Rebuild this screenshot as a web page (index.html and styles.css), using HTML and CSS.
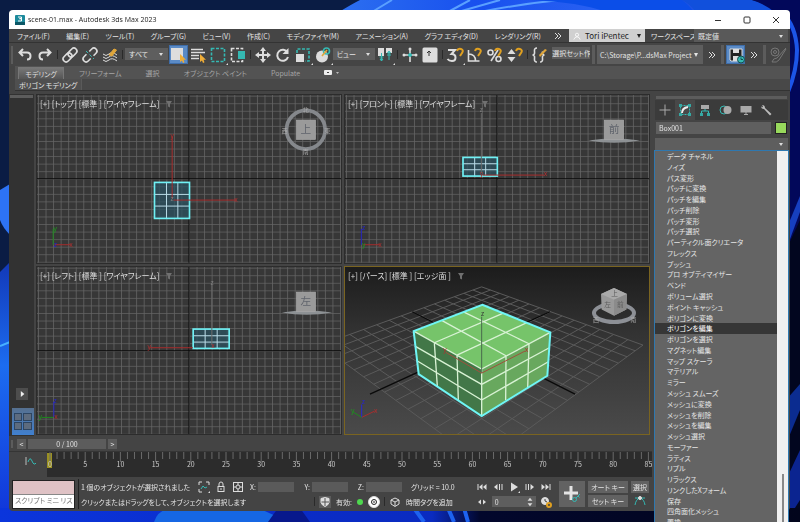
FILE: index.html
```html
<!DOCTYPE html>
<html lang="ja">
<head>
    <meta charset="UTF-8">
    <meta name="viewport" content="width=device-width, initial-scale=1.0">
    <title>scene-01.max - Autodesk 3ds Max 2023</title>
    <link rel="stylesheet" href="styles.css">
</head>
<body>

    <svg class="wallpaper" viewBox="0 0 800 522" preserveAspectRatio="none" aria-hidden="true">
        <defs>
            <linearGradient id="wallLeft" x1="0" y1="0" x2="0" y2="1">
                <stop offset="0" stop-color="#1238b8"/><stop offset=".4" stop-color="#1c6cf0"/><stop offset="1" stop-color="#1033d8"/>
            </linearGradient>
            <linearGradient id="wallTop" x1="0" y1="0" x2="1" y2="0">
                <stop offset="0" stop-color="#2c6ff0"/><stop offset=".3" stop-color="#1850ee"/><stop offset=".6" stop-color="#2a62f2"/><stop offset="1" stop-color="#0c3fd0"/>
            </linearGradient>
            <linearGradient id="wallBottom" x1="0" y1="0" x2="1" y2="0">
                <stop offset="0" stop-color="#0b35dc"/><stop offset=".35" stop-color="#0a2cc8"/><stop offset=".54" stop-color="#0a2bc0"/><stop offset=".6" stop-color="#02072c"/><stop offset="1" stop-color="#02051c"/>
            </linearGradient>
        </defs>
        <rect width="800" height="522" fill="#0a1c44"/>
        <path d="M339 12 Q352 4 360 0 H700 Q780 10 796 70 L700 60 H339Z" fill="url(#wallTop)"/>
        <path d="M372 12 L392 0 M448 12 L470 0 M458 12 L500 0 M480 12 Q520 4 560 0" stroke="#5aa0ff" stroke-width="2" fill="none"/>
        <path d="M530 0 Q580 2 606 12 H694 Q688 4 682 0Z" fill="#0b4ee8"/>
        <path d="M682 0 Q690 4 696 12 H782 Q766 4 752 0Z" fill="#1150dc"/>
        <path d="M752 0 H800 V522 H786 V24 Q772 6 752 0Z" fill="#02085a"/>
        <path d="M782 12 Q796 26 797 50 Q797 70 788 92" stroke="#1c55e8" stroke-width="4" fill="none"/>
        <path d="M786 230 L800 196 V212 L786 250Z" fill="#163fc0"/>
        <path d="M786 250 L800 220 V522 H786Z" fill="#02061f"/>
        <path d="M786 400 L800 384 V410 L786 444Z" fill="#0b2c90"/>
        <path d="M786 480 L800 450 V500 L786 522Z" fill="#0b2490"/>
        <path d="M0 190 L10 184 V235 Q3 228 0 220Z" fill="#2d73f5"/>
        <path d="M0 272 L10 262 V522 H0Z" fill="url(#wallLeft)"/>
        <path d="M0 346 L10 342" stroke="#46b0ff" stroke-width="2"/>
        <rect y="508" width="800" height="14" fill="url(#wallBottom)"/>
        <path d="M154 522 Q157 512 168 508 H256 Q276 514 282 522Z" fill="#1667e4"/>
        <path d="M268 522 L278 508 H300 L310 522Z" fill="#08188c"/>
        <path d="M414 508 L424 522 M448 508 L454 522 M464 508 L468 522" stroke="#1d62f0" stroke-width="4"/>
    </svg>

    <div class="window">
        <header class="titlebar">
            <svg class="app-icon" viewBox="0 0 10 10"><rect width="10" height="10" rx="1" fill="#1c8a9c"/><rect y="7" width="10" height="3" fill="#0c5766"/><path d="M3 2h3.500v1.700H4.500h2V6H3" stroke="#fff" fill="none"/></svg>
            <h1>scene-01.max - Autodesk 3ds Max 2023</h1>
            <button class="win-button" aria-label="最小化"><svg viewBox="0 0 8 8"><path d="M1 4.500h6"/></svg></button>
            <button class="win-button" aria-label="最大化"><svg viewBox="0 0 8 8"><rect x="1" y="1" width="6" height="6" rx="1"/></svg></button>
            <button class="win-button" aria-label="閉じる"><svg viewBox="0 0 8 8"><path d="M1 1l6 6M7 1l-6 6"/></svg></button>
        </header>

        <nav class="menubar">
            <div class="menus">
                <button>ファイル(F)</button>
                <button>編集(E)</button>
                <button>ツール(T)</button>
                <button>グループ(G)</button>
                <button>ビュー(V)</button>
                <button>作成(C)</button>
                <button>モディファイヤ(M)</button>
                <button>アニメーション(A)</button>
                <button>グラフ エディタ(D)</button>
                <button>レンダリング(R)</button>
            </div>
            <button class="more" aria-label="その他のメニュー"><svg viewBox="0 0 10 10"><path d="M2 2l3 3-3 3M5 2l3 3-3 3"/></svg></button>
            <button class="user"><svg viewBox="0 0 10 10"><circle cx="5" cy="3.500" r="2"/><path d="M1 9.500q1-3.500 4-3.500t4 3.500"/></svg><span>Tori iPentec</span><i class="caret"></i></button>
            <label for="workspace">ワークスペース:</label>
            <select id="workspace"><option>既定値</option></select>
        </nav>

        <div class="toolbar">
            <span class="handle"></span>
            <button aria-label="元に戻す"><svg viewBox="0 0 20 20"><path d="M8 4L4.500 7.500 8 11M5 7.500h7q3.500 0 3.500 3.500T12 14.500" class="thick"/></svg></button>
            <button aria-label="やり直し"><svg viewBox="0 0 20 20"><path d="M12 4l3.500 3.500L12 11M15 7.500H8q-3.500 0-3.500 3.500T8 14.500" class="thick"/></svg></button>
            <span class="sep"></span>
            <button aria-label="リンク"><svg viewBox="0 0 20 20"><g transform="rotate(-45 10 10)" stroke-width="1.600"><rect x="1.500" y="7" width="10" height="6" rx="3"/><rect x="8.500" y="7" width="10" height="6" rx="3"/></g></svg></button>
            <button aria-label="リンク解除"><svg viewBox="0 0 20 20"><g transform="rotate(-45 10 10)" stroke-width="1.600"><path d="M8 13H4.500a3 3 0 010-6H8M12 7h3.500a3 3 0 010 6H12"/></g><path d="M6 6l8 8" class="teal" stroke-dasharray="3 2"/></svg></button>
            <button aria-label="スペース ワープにバインド"><svg viewBox="0 0 20 20"><path d="M3 9q3 3 6 0t8 1M3 12q3 3 6 0t8 1M3 15q3 3 6 0t8 1"/><path d="M9 10l5-6 2.500 1-4.500 6z" fill="#e0a63a" stroke="#e0a63a"/></svg></button>
            <span class="sep"></span>
            <select class="filter" aria-label="選択フィルタ"><option>すべて</option></select>
            <button class="pressed" aria-label="オブジェクトを選択"><svg viewBox="0 0 20 20"><rect x="3.500" y="3.500" width="11" height="11" fill="#ddd"/><path d="M12 9v8l2-1.500 1 2.500 1.500-.8-1-2.400h2.500z" fill="#f0ae38" stroke="none"/></svg></button>
            <button aria-label="名前による選択"><svg viewBox="0 0 20 20"><path d="M3 4.500h12M3 7.500h14M3 10.500h8M3 13.500h8" stroke-width="1.600"/><path d="M12 9v8l2-1.500 1 2.500 1.500-.8-1-2.400h2.500z" fill="#f0ae38" stroke="none"/></svg></button>
            <button class="flyout" aria-label="矩形選択領域"><svg viewBox="0 0 20 20"><rect x="3.500" y="3.500" width="13" height="13" class="teal" stroke-width="1.600" stroke-dasharray="3 1.500"/></svg></button>
            <button aria-label="窓/交差"><svg viewBox="0 0 20 20"><rect x="3.500" y="3.500" width="11" height="13" stroke-width="1.600" stroke-dasharray="3 1.500"/><rect x="10" y="6" width="7" height="8" fill="#35b9b3" stroke="none"/></svg></button>
            <span class="sep"></span>
            <button aria-label="移動"><svg viewBox="0 0 20 20"><path d="M10 5v10M5 10h10" class="thick"/><path d="M10 2l3 4H7zM10 18l3-4H7zM2 10l4-3v6zM18 10l-4-3v6z" class="solid"/></svg></button>
            <button aria-label="回転"><svg viewBox="0 0 20 20"><path d="M14.500 7.500A5.500 5.500 0 1015 12" class="thick"/><path d="M15.500 3v6h-6z" class="solid"/></svg></button>
            <button class="flyout" aria-label="スケール"><svg viewBox="0 0 20 20"><path d="M4 8V4h12v12h-4" class="teal" stroke-width="1.600" stroke-dasharray="3 1.500"/><rect x="3" y="9" width="8" height="8" class="solid"/></svg></button>
            <button class="flyout" aria-label="選択して配置"><svg viewBox="0 0 20 20"><circle cx="9" cy="11.500" r="6" class="solid"/><circle cx="13.500" cy="6" r="3" class="teal" stroke-width="1.600"/><path d="M9 11l5-6" stroke="#e0a63a" stroke-width="1.600"/></svg></button>
            <select class="coord" aria-label="参照座標系"><option>ビュー</option></select>
            <button class="flyout" aria-label="基点中心"><svg viewBox="0 0 20 20"><path d="M3 3h6v8H3zM11 3h6v5h-6z" class="solid"/><path d="M6.500 8v8M14 7v8M4.500 12h4M12 10h4M6.500 16l-1.500-2h3zM14 6l-1.500 2h3z" class="teal"/></svg></button>
            <span class="sep"></span>
            <button aria-label="選択とマニピュレート"><svg viewBox="0 0 20 20"><path d="M10 3v14M3 10h14" stroke-width="1.600"/><circle cx="10" cy="4" r="1.500" class="solid"/><circle cx="4" cy="10" r="1.500" class="solid"/><circle cx="16" cy="10" r="1.500" class="solid"/><circle cx="10" cy="10" r="1.500" fill="#35b9b3" class="teal"/></svg></button>
            <button aria-label="キーボード ショートカット"><svg viewBox="0 0 20 20"><rect x="2.500" y="2.500" width="15" height="15" rx="1.500" class="solid"/><path d="M9 6v5M7 8l2-2 2 2" stroke="#333"/></svg></button>
            <span class="sep"></span>
            <button class="flyout" aria-label="3D スナップ"><svg viewBox="0 0 20 20"><path d="M3 5h7l-3.500 4q4 0 4 3.500T7 16q-3 0-4.500-2" class="thick"/><path d="M12 6q1-3 4-2t1 4l-2 3" class="gold"/></svg></button>
            <button aria-label="角度スナップ"><svg viewBox="0 0 20 20"><path d="M3.500 5v11h11M3.500 9q7 0 7 7" stroke-width="1.600"/><path d="M10 6q1-3 4-2t1 4l-2 3" class="gold"/></svg></button>
            <button aria-label="パーセント スナップ"><svg viewBox="0 0 20 20"><g stroke-width="1.600"><circle cx="5.500" cy="7.500" r="2.500"/><circle cx="13.500" cy="14" r="2.500"/><path d="M13 5L6 16"/></g><path d="M10 6q1-3 4-2t1 4l-2 3" class="gold"/></svg></button>
            <button aria-label="スピナー スナップ"><svg viewBox="0 0 20 20"><path d="M6.500 4l4 5h-8zM6.500 17l4-5h-8z" class="solid"/><path d="M11 6q1-3 4-2t1 4l-2 3" class="gold"/></svg></button>
            <span class="sep"></span>
            <button aria-label="名前付き選択セットを編集"><svg viewBox="0 0 20 20"><path d="M7 3q-3 0-2.500 3.500t-2 3.500q2.500 0 2 3.500T7 17M10 17q3 0 2.500-3.500t2-3.500q-2.500 0-2-3.500" stroke-width="1.600"/><path d="M9 10l6-6 2 1-7 7z" fill="#e0a63a" stroke="none"/></svg></button>
            <input class="set-name" type="text" value="選択セット作" aria-label="選択セット">
            <span class="bar"></span>
            <button class="project"><span>C:\Storage\P...dsMax Project</span><i class="caret"></i></button>
            <button class="more" aria-label="その他"><svg viewBox="0 0 10 10"><path d="M2 2l3 3-3 3M5 2l3 3-3 3"/></svg></button>
            <span class="bar"></span>
            <button class="pressed" aria-label="自動バックアップ"><svg viewBox="0 0 20 20"><path d="M4 4h12v12H5l-1-1z" fill="#222" stroke="#ddd"/><path d="M7 4h6v4H7zM7 11h6v5H7z" class="solid"/><circle cx="15" cy="14.500" r="3.500" fill="#35b9b3" stroke="#164d50"/><path d="M15 12.500v2h2" stroke="#164d50"/></svg></button>
            <button class="more" aria-label="その他"><svg viewBox="0 0 10 10"><path d="M2 2l3 3-3 3M5 2l3 3-3 3"/></svg></button>
            <span class="bar"></span>
            <button class="dim" aria-label="ペイント"><svg viewBox="0 0 20 20"><circle cx="7" cy="7" r="4"/><circle cx="7" cy="7" r="1.500"/><path d="M18 3L9 13q-4 0-5 4 5 1 7-2l7-11"/></svg></button>
        </div>

        <div class="ribbon-tabs">
            <button class="active">モデリング</button>
            <button>フリーフォーム</button>
            <button>選択</button>
            <button>オブジェクト ペイント</button>
            <button>Populate</button>
            <button class="ribbon-toggle" aria-label="リボン表示"><svg viewBox="0 0 16 8"><rect x="0" y="1" width="8" height="5" rx="1" fill="#eee"/><rect x="3" y="3" width="2" height="1" fill="#444"/><path d="M12 3h3l-1.500 2z" fill="#bbb"/></svg></button>
        </div>
        <div class="ribbon-panel"><button>ポリゴン モデリング</button></div>

        <div class="workspace">
            <main class="stage">
                <div class="view-row">
                    <aside class="layouts">
                        <span class="grip"></span>
                        <button class="expand" aria-label="レイアウト タブ"><svg viewBox="0 0 10 10"><path d="M4 2.500v5l3-2.500z" fill="#eee"/></svg></button>
                        <button class="layout-tab" aria-label="4 分割レイアウト"><i></i><i></i><i></i><i></i></button>
                    </aside>

                    <div class="viewports">
                        <section class="viewport">
                            <svg viewBox="0 0 304 168" preserveAspectRatio="xMidYMid slice">
                                <defs>
                                    <pattern id="grid" x="152" y="84" width="7.550" height="7.550" patternUnits="userSpaceOnUse">
                                        <path d="M0 0H7.550M0 0V7.550" stroke="#646464" stroke-width="1.600" fill="none"/>
                                    </pattern>
                                </defs>
                                <rect width="304" height="168" fill="url(#grid)"/>
                                <path d="M152 0V168M0 84H304" class="origin"/>
                                <g transform="translate(-37.500 -5) scale(.33333)">
                                    <rect x="465" y="278" width="105" height="108" class="wire-fill"/>
                                    <path d="M501 278v108M535 278v108M465 314h105M465 349h105" class="wire"/>
                                    <rect x="465" y="278" width="105" height="108" class="outline"/>
                                    <path d="M518 327V140M522 331H708" class="red"/>
                                    <text x="513" y="146" class="axis r">y</text><text x="704" y="337" class="axis r">x</text><text x="513" y="334" class="axis k">z</text>
                                    <path d="M161 465V417" stroke="#1c8a1c" class="ln"/><path d="M165 465H212" class="red"/>
                                    <text x="162" y="425" class="axis g">y</text><text x="209" y="471" class="axis r">x</text><text x="163" y="471" class="axis b">z</text>
                                    <circle cx="919" cy="120" r="58" class="ring"/>
                                    <rect x="891" y="91" width="57" height="58" class="cube"/>
                                    <text x="919" y="131" class="face">上</text>
                                    <text x="919" y="67" class="compass">北</text><text x="919" y="194" class="compass">南</text><text x="856" y="129" class="compass">西</text><text x="983" y="129" class="compass">東</text>
                                </g>
                            </svg>
                            <p class="view-label">[+] [トップ] [標準 ] [ワイヤフレーム]<svg viewBox="0 0 8 8"><path d="M1 1h6L5 4v3.500L3 6.500V4z"/></svg></p>
                        </section>

                        <section class="viewport">
                            <svg viewBox="0 0 304 168" preserveAspectRatio="xMidYMid slice">
                                <rect width="304" height="168" fill="url(#grid)"/>
                                <path d="M152 0V168M0 84H304" class="origin"/>
                                <g transform="translate(-5 -5) scale(.33333)">
                                    <rect x="369" y="203" width="103" height="56" class="wire-fill"/>
                                    <path d="M404 203v56M437 203v56M369 222h103M369 240h103" class="wire"/>
                                    <rect x="369" y="203" width="103" height="56" class="outline"/>
                                    <path d="M424 250V70" class="grey"/><path d="M428 256H612" class="red"/>
                                    <text x="419" y="68" class="axis k">z</text><text x="611" y="260" class="axis r">x</text><text x="419" y="260" class="axis r">y</text>
                                    <path d="M64 465V417" stroke="#2020c0" class="ln"/><path d="M70 465H118" class="red"/>
                                    <text x="66" y="422" class="axis b">z</text><text x="115" y="471" class="axis r">x</text><text x="66" y="471" class="axis g">y</text>
                                    <path d="M745 152Q822 140 900 152Q822 166 745 152Z" class="disc"/>
                                    <rect x="793" y="91" width="58" height="58" class="cube"/>
                                    <text x="822" y="131" class="face">前</text>
                                </g>
                            </svg>
                            <p class="view-label">[+] [フロント] [標準 ] [ワイヤフレーム]<svg viewBox="0 0 8 8"><path d="M1 1h6L5 4v3.500L3 6.500V4z"/></svg></p>
                        </section>

                        <section class="viewport">
                            <svg viewBox="0 0 304 168" preserveAspectRatio="xMidYMid slice">
                                <rect width="304" height="168" fill="url(#grid)"/>
                                <path d="M152 0V168M0 84H304" class="origin"/>
                                <g transform="translate(-37.500 -5) scale(.33333)">
                                    <rect x="581" y="202" width="108" height="58" class="wire-fill"/>
                                    <path d="M617 202v58M653 202v58M581 222h108M581 241h108" class="wire"/>
                                    <rect x="581" y="202" width="108" height="58" class="outline"/>
                                    <path d="M637 250V70" class="grey"/><path d="M452 258H580" class="red"/>
                                    <text x="633" y="70" class="axis k">z</text><text x="444" y="262" class="axis r">y</text><text x="635" y="260" class="axis r">x</text>
                                    <path d="M163 465V420" stroke="#2020c0" class="ln"/><path d="M161 467H126" stroke="#1c8a1c" class="ln"/>
                                    <text x="162" y="423" class="axis b">z</text><text x="164" y="471" class="axis r">x</text><text x="117" y="472" class="axis g">y</text>
                                    <path d="M847 152Q920 140 998 152Q920 166 847 152Z" class="disc"/>
                                    <rect x="891" y="91" width="57" height="58" class="cube"/>
                                    <text x="919" y="131" class="face">左</text>
                                </g>
                            </svg>
                            <p class="view-label">[+] [レフト] [標準 ] [ワイヤフレーム]<svg viewBox="0 0 8 8"><path d="M1 1h6L5 4v3.500L3 6.500V4z"/></svg></p>
                        </section>

                        <section class="viewport perspective">
                            <svg viewBox="0 0 304 168" preserveAspectRatio="xMidYMid slice">
                                <g transform="translate(-5 -5) scale(.33333)">
                                    <g id="floor"></g>
                                    <path d="M217 150L705 397M630 150L90 397" stroke="#0a0a0a" stroke-width="4"/>
                                    <path d="M427 129L631 212 425 322 221 208Z" fill="#76c46a"/>
                                    <path d="M221 208L425 322V463L236 337Z" fill="#427748"/>
                                    <path d="M631 212L425 322V463L622 342Z" fill="#68a85e"/>
                                    <path d="M283 243L490 154M351 280L560 183M498 282L305 176M567 246L372 151M221 208L425 322 631 212M425 322V463M283 243L292 374M351 280L355 416M498 282L497 415M567 246L563 380M225 253L425 368 628 258M231 297L425 415 625 300" stroke="#d8f2d4" stroke-width="4" fill="none"/>
                                    <path d="M427 129L631 212 622 342 425 463 236 337 221 208Z" stroke="#6ff5f5" stroke-width="6" fill="none"/>
                                    <path d="M425 334V165" stroke="#49694c" class="ln"/><path d="M318 272L425 334 555 268" stroke="#a0503c" class="ln" fill="none"/>
                                    <text x="423" y="164" class="axis d">z</text><text x="310" y="272" class="axis r">y</text><text x="554" y="270" class="axis r">x</text>
                                    <path d="M65 467V428" stroke="#2828d0" class="ln"/><path d="M65 467L104 448" class="red"/><path d="M65 467L40 451" stroke="#1c8a1c" class="ln"/>
                                    <text x="65" y="428" class="axis b">z</text><text x="102" y="453" class="axis r">x</text><text x="33" y="455" class="axis g">y</text>
                                    <ellipse cx="822" cy="154" rx="60" ry="27" fill="none" stroke="#8d9096" stroke-width="12"/>
                                    <path d="M822 79L861 97 859 143 822 162 785 143 783 97Z" fill="#999"/>
                                    <path d="M822 79L861 97 822 114 783 97Z" fill="#aaa"/><path d="M822 114L861 97 859 143 822 162Z" fill="#8b8b8b"/>
                                    <text x="824" y="104" class="cubelet">上</text><text x="803" y="137" class="cubelet">左</text><text x="841" y="137" class="cubelet">前</text>
                                    <text x="768" y="182" class="compass">西</text><text x="880" y="182" class="compass">南</text>
                                </g>
                            </svg>
                            <p class="view-label">[+] [パース] [標準 ] [エッジ面 ]<svg viewBox="0 0 8 8"><path d="M1 1h6L5 4v3.500L3 6.500V4z"/></svg></p>
                        </section>
                    </div>
                </div>

                <div class="time-slider">
                    <span class="handle"></span>
                    <button>&lt;</button>
                    <button class="frame">0 / 100</button>
                    <button>&gt;</button>
                </div>
                <div class="track">
                    <button class="curve" aria-label="ミニ カーブ エディタ"><svg viewBox="0 0 12 10"><path d="M1 1v8" stroke="#bbb"/><path d="M3 6q2-6 4-1t4 2" class="teal"/></svg></button>
                    <svg id="ruler" class="ruler" viewBox="0 0 605 26" preserveAspectRatio="xMinYMin slice"></svg>
                </div>

                <footer class="status">
                    <div class="listener">
                        <span class="macro"></span>
                        <input type="text" value="スクリプト ミニ リス" aria-label="MAXScript ミニ リスナー">
                    </div>
                    <div class="info">
                        <div class="row">
                            <p class="message">1 個のオブジェクトが選択されました</p>
                            <button class="flyout" aria-label="選択の切り替え"><svg viewBox="0 0 12 12"><path d="M1 4V1h3M8 1h3v3M1 8v3h3" stroke="#ddd"/><path d="M3 8l2-3 2 2 2-1" class="teal"/></svg></button>
                            <button aria-label="選択をロック"><svg viewBox="0 0 12 12"><rect x="3" y="5.500" width="6" height="5"/><path d="M4 5V3q0-2 2-2t2 2v2M6 7v2"/></svg></button>
                            <button aria-label="絶対モード"><svg viewBox="0 0 12 12"><rect x="1.500" y="1.500" width="9" height="9"/><circle cx="6" cy="6" r="2"/><path d="M6 2v2M6 8v2M2 6h2M8 6h2"/></svg></button>
                            <label for="posX">X:</label><input id="posX" class="coordinate" type="text">
                            <label for="posY">Y:</label><input id="posY" class="coordinate" type="text">
                            <label for="posZ">Z:</label><input id="posZ" class="coordinate" type="text">
                            <p class="grid-size">グリッド = 10.0</p>
                        </div>
                        <div class="row">
                            <p class="prompt">クリックまたはドラッグをして、オブジェクトを選択します</p>
                            <span class="sep"></span>
                            <button class="raised" aria-label="セキュリティ ツール"><svg viewBox="0 0 12 12"><path d="M6 1.500l4 1v4q-1 3-4 4-3-1-4-4v-4z" fill="#ddd"/><path d="M6 2v4H2.500M6 10V6h4" stroke="#555"/></svg></button>
                            <span class="enabled">有効:</span>
                            <i class="dot"></i>
                            <button class="clock" aria-label="自動更新"><svg viewBox="0 0 12 12"><circle cx="6" cy="6" r="5.500" fill="#fff"/><circle cx="6" cy="6" r="2.500" stroke="#222"/><path d="M6 5v2" stroke="#222"/></svg></button>
                            <span class="sep"></span>
                            <button aria-label="時間タグ"><svg viewBox="0 0 12 12"><path d="M6 2l4 2v4L6 10.500 2 8V4zM2 4l4 2 4-2M6 6v4"/></svg></button>
                            <p class="tag">時間タグを追加</p>
                        </div>
                    </div>
                    <div class="playback">
                        <div class="row">
                            <button aria-label="最初へ"><svg viewBox="0 0 12 12"><path d="M2 3v6" /><path d="M6.500 3v6L3 6zM10.500 3v6L7 6z" class="solid"/></svg></button>
                            <button aria-label="前のフレーム"><svg viewBox="0 0 12 12"><path d="M5.500 3v6L2 6z" class="solid"/><path d="M7.500 3v6M10 3v6"/></svg></button>
                            <button class="play" aria-label="再生"><svg viewBox="0 0 12 12"><path d="M3 1.500v9l7-4.500z" class="solid"/></svg></button>
                            <button aria-label="次のフレーム"><svg viewBox="0 0 12 12"><path d="M6.500 3v6L10 6z" class="solid"/><path d="M2 3v6M4.500 3v6"/></svg></button>
                            <button aria-label="最後へ"><svg viewBox="0 0 12 12"><path d="M10 3v6"/><path d="M1.500 3v6L5 6zM5.500 3v6L9 6z" class="solid"/></svg></button>
                        </div>
                        <div class="row">
                            <button aria-label="キー モード"><svg viewBox="0 0 12 12"><path d="M5 3.500v5L2 6zM7 3.500v5L10 6z" class="solid"/></svg></button>
                            <span class="spinner"><input type="text" value="0" aria-label="現在のフレーム"><svg viewBox="0 0 6 10"><path d="M3 1.500l2 2.500H1zM3 8.500L5 6H1z" fill="#ddd"/></svg></span>
                            <button aria-label="時間設定"><svg viewBox="0 0 12 12"><circle cx="5" cy="5" r="3.500" fill="#ddd"/><path d="M5 3v2l2 1" stroke="#444"/><circle cx="9" cy="9" r="2" class="gold"/></svg></button>
                        </div>
                    </div>
                    <button class="set-keys" aria-label="キーを設定"><svg viewBox="0 0 26 26"><path d="M12 5v14M5 12h14" stroke="#e4e4e4" stroke-width="3"/><circle cx="15.500" cy="18.500" r="2" class="teal"/><path d="M17 17l4-4M19 15l1.500 1.500" class="teal"/></svg></button>
                    <div class="keys"><button>オート キー</button><button>セット キー</button></div>
                    <div class="keys filters"><button>選択</button><button class="flat" aria-label="接線"><svg viewBox="0 0 14 12"><path d="M2 10q1-6 5-7 4 1 5 7M2 3h10" class="teal"/><circle cx="7" cy="3" r="1.500" fill="#ddd"/></svg></button></div>
                </footer>
            </main>

            <aside class="command-panel">
                <span class="grip"></span>
                <div class="panel-tabs">
                    <button aria-label="作成"><svg viewBox="0 0 14 14"><path d="M7 1.500v11M1.500 7h11"/></svg></button>
                    <button class="active" aria-label="修正"><svg viewBox="0 0 14 14"><rect x="2.500" y="2.500" width="9" height="9" class="teal" stroke-dasharray="2 1"/><path d="M4 10q0-5 6-6" stroke="#eee" stroke-width="2"/><path d="M1 1h3v3H1zM10 1h3v3h-3zM1 10h3v3H1zM10 10h3v3h-3z" fill="#35a8a3"/></svg></button>
                    <button aria-label="階層"><svg viewBox="0 0 14 14"><rect x="3" y="2" width="8" height="4" fill="#aaa"/><path d="M7 6v2M3.500 11V8h7v3" class="teal"/><path d="M2 10h3v3H2zM9 10h3v3H9z" fill="#35a8a3"/></svg></button>
                    <button aria-label="モーション"><svg viewBox="0 0 14 14"><circle cx="5" cy="7" r="4" class="teal"/><circle cx="8.500" cy="7" r="4" fill="#aaa"/></svg></button>
                    <button aria-label="表示"><svg viewBox="0 0 14 14"><rect x="1.500" y="3" width="11" height="6.500" fill="#aaa"/><path d="M7 9v2M5 11.500h4"/></svg></button>
                    <button aria-label="ユーティリティ"><svg viewBox="0 0 14 14"><path d="M2 3q0 3 3 3l6 6.500 1.500-1.500L6 5q0-3-3-3l1 1.500L3 4.500z" fill="#bbb"/></svg></button>
                </div>
                <div class="object-name">
                    <input type="text" value="Box001" aria-label="オブジェクト名">
                    <button class="swatch" aria-label="オブジェクト カラー"></button>
                </div>
                <div class="modifier">
                    <select aria-label="モディファイヤ リスト"><option></option></select>
                    <div class="modifier-menu">
                        <ul role="listbox" aria-label="モディファイヤ">
                            <li role="option">データ チャネル</li>
                            <li role="option">ノイズ</li>
                            <li role="option">パス変形</li>
                            <li role="option">パッチに変換</li>
                            <li role="option">パッチを編集</li>
                            <li role="option">パッチ削除</li>
                            <li role="option">パッチ変形</li>
                            <li role="option">パッチ選択</li>
                            <li role="option">パーティクル面クリエータ</li>
                            <li role="option">フレックス</li>
                            <li role="option">プッシュ</li>
                            <li role="option">プロ オプティマイザー</li>
                            <li role="option">ベンド</li>
                            <li role="option">ボリューム選択</li>
                            <li role="option">ポイント キャッシュ</li>
                            <li role="option">ポリゴンに変換</li>
                            <li role="option" aria-selected="true">ポリゴンを編集</li>
                            <li role="option">ポリゴンを選択</li>
                            <li role="option">マグネット編集</li>
                            <li role="option">マップ スケーラ</li>
                            <li role="option">マテリアル</li>
                            <li role="option">ミラー</li>
                            <li role="option">メッシュ スムーズ</li>
                            <li role="option">メッシュに変換</li>
                            <li role="option">メッシュを削除</li>
                            <li role="option">メッシュを編集</li>
                            <li role="option">メッシュ選択</li>
                            <li role="option">モーファー</li>
                            <li role="option">ラティス</li>
                            <li role="option">リプル</li>
                            <li role="option">リラックス</li>
                            <li role="option">リンクしたXフォーム</li>
                            <li role="option">保存</li>
                            <li role="option">四角面化メッシュ</li>
                            <li role="option">置換</li>
                        </ul>
                        <div class="scrollbar"><i></i></div>
                    </div>
                </div>
            </aside>
        </div>
    </div>

    <script src="script.js"></script>
</body>
</html>
```
FILE: styles.css
```css
* {
    box-sizing: border-box;
}
body {
    margin: 0;
    height: 100vh;
    padding: 10px 10px 11px 9px;
    overflow: hidden;
    display: flex;
    background: #0a1c44;
    color: #e4e4e4;
    font-family: "Noto Sans CJK JP", sans-serif;
    font-size: 7px;
    line-height: 10px;
    font-feature-settings: "palt";
}
.wallpaper {
    position: fixed;
    inset: 0;
    width: 100%;
    height: 100%;
    z-index: -1;
}
button,
input,
select {
    margin: 0;
    padding: 0;
    border: 0;
    border-radius: 0;
    background: none;
    color: inherit;
    font: inherit;
    font-feature-settings: inherit;
    min-width: 0;
}
button {
    display: flex;
    align-items: center;
    justify-content: center;
    white-space: nowrap;
}
select {
    appearance: none;
    padding: 0 4px;
    background: #5e5e5e url("data:image/svg+xml,%3Csvg xmlns='http://www.w3.org/2000/svg' viewBox='0 0 6 6'%3E%3Cpath d='M1 2h4L3 5z' fill='%23ddd'/%3E%3C/svg%3E") no-repeat right 4px center;
    background-size: 6px 6px;
}
p,
h1,
ul {
    margin: 0;
    padding: 0;
    white-space: nowrap;
}
svg {
    display: block;
    fill: none;
}
button svg {
    stroke: #ddd;
}
svg .solid {
    fill: #ddd;
    stroke: none;
}
svg .thick {
    stroke-width: 2;
}
svg .teal {
    stroke: #35b9b3;
}
svg .gold {
    stroke: #e0a020;
    stroke-width: 2;
}
.caret {
    border: 2px solid transparent;
    border-top: 4px solid currentColor;
    border-bottom: 0;
}

/* window frame */
.window {
    flex: 1;
    min-width: 0;
    display: flex;
    flex-direction: column;
    background: #444;
    border-radius: 4px;
}
.titlebar {
    height: 19px;
    display: flex;
    align-items: center;
    padding: 0 0 0 6px;
    background: #fff;
    color: #222;
    border-radius: 4px 4px 0 0;
}
.titlebar h1 {
    flex: 1;
    margin-left: 3px;
    font: 7px/12px "Open Sans", sans-serif;
}
.app-icon {
    width: 10px;
    height: 10px;
}
.win-button {
    width: 29px;
    height: 19px;
}
.win-button svg {
    width: 8px;
    height: 8px;
    stroke: #333;
}

.menubar {
    height: 14px;
    display: flex;
    align-items: center;
    padding: 0 2px 0 8px;
    background: #454545;
    border-bottom: 1px solid #333;
}
.menus {
    flex: 1;
    display: flex;
    justify-content: space-between;
    margin-right: 8px;
}
.more {
    width: 18px;
}
.more svg {
    width: 10px;
    height: 10px;
}
.user {
    width: 76px;
    height: 13px;
    padding: 0 4px;
    margin: 0 6px 0 2px;
    gap: 4px;
    background: #d0d0d0;
    color: #222;
    font-size: 8px;
}
.user svg {
    width: 8px;
    height: 8px;
    stroke: #fff;
}
.user .caret {
    margin-left: auto;
}
.menubar select {
    width: 94px;
    height: 13px;
    background-color: #595959;
}
.menubar label {
    width: 43px;
    white-space: nowrap;
}

.toolbar {
    height: 23px;
    display: flex;
    align-items: center;
    padding: 0 2px;
    background: #454545;
}
.handle {
    width: 2px;
    align-self: stretch;
    margin: 3px 2px 2px 0;
    background: #5c5c5c;
}
.toolbar button {
    flex: none;
    width: 20px;
    height: 20px;
    position: relative;
}
.toolbar button svg {
    width: 20px;
    height: 20px;
    flex: none;
}
.toolbar .pressed {
    width: 19px;
    height: 19px;
    background: #5b8bc6;
    border: 1px solid #3f6da8;
}
.flyout::after,
.play::after {
    content: "";
    position: absolute;
    right: 0;
    bottom: 0;
    border: 1px solid #ddd;
    border-top-color: transparent;
    border-left-color: transparent;
}
.sep {
    width: 1px;
    height: 9px;
    margin: 0 2px;
    background: #2a2a2a;
}
.filter,
.coord {
    height: 12px;
    margin-bottom: 2px;
}
.filter {
    width: 43px;
    margin-right: 1px;
}
.coord {
    width: 43px;
}
.set-name {
    width: 38px;
    height: 12px;
    margin: 0 2px;
    margin-bottom: 4px;
    background: #5e5e5e;
}
.bar {
    width: 3px;
    height: 19px;
    margin: 0 2px 0 0;
    background: #5c5c5c;
}
.toolbar .project {
    width: 106px;
    height: 19px;
    padding: 0 5px 0 3px;
    justify-content: space-between;
    background: #5e5e5e;
}
.toolbar .more {
    margin: 0 auto;
    width: 18px;
}
.toolbar .more svg {
    width: 10px;
    height: 10px;
}
.toolbar .dim svg {
    stroke: #777;
}

.ribbon-tabs {
    height: 13px;
    display: flex;
    margin-left: 6px;
    background: #535353;
    color: #a5a5a5;
}
.ribbon-tabs button {
    margin-right: 24px;
}
.ribbon-tabs .active {
    width: 46px;
    margin: 1px 15px 0 3px;
    background: linear-gradient(#777, #555);
    border: 1px solid #777;
    border-bottom: 0;
    color: #ddd;
}
.ribbon-toggle svg {
    width: 16px;
    height: 8px;
    stroke: none;
}
.ribbon-panel {
    height: 12px;
    margin-left: 6px;
    background: #484848;
    border-bottom: 1px solid #333;
    display: flex;
}
.ribbon-panel button {
    padding: 0 4px;
    background: #4f4f4f;
    border-right: 1px solid #5a5a5a;
}

.workspace {
    flex: 1;
    min-height: 0;
    display: flex;
}
.stage {
    flex: 1;
    min-width: 0;
    display: flex;
    flex-direction: column;
    overflow: hidden;
}
.view-row {
    flex: 1;
    min-height: 0;
    display: flex;
}
.layouts {
    width: 25px;
    margin-top: 3px;
    display: flex;
    flex-direction: column;
    align-items: center;
    background: #323232;
}
.grip {
    align-self: stretch;
    height: 3px;
    margin: 1px;
    background: #5c5c5c;
}
.expand {
    width: 12px;
    height: 12px;
    margin-top: auto;
    background: #4d4d4d;
}
.expand svg {
    width: 12px;
    height: 12px;
    stroke: none;
}
.layout-tab {
    width: 22px;
    height: 27px;
    margin: 8px 0 1px 2px;
    padding: 5px 2px;
    display: grid;
    grid-template-columns: 1fr 1fr;
    grid-template-rows: 1fr 1fr;
    justify-content: stretch;
    align-items: stretch;
    gap: 1px;
    background: linear-gradient(#56708f, #4080d0);
}
.layout-tab i {
    background: #5d6b7e;
    border: 1px solid #2d4562;
}
.viewports {
    flex: 1;
    min-width: 0;
    display: grid;
    grid-template-columns: 1fr 1fr;
    grid-template-rows: 1fr 1fr;
    gap: 4px;
    padding: 4px 3px 2px 3px;
}
.viewport {
    position: relative;
    min-width: 0;
    min-height: 0;
    overflow: hidden;
    background: #373737;
    outline: 1px solid #2c2c2c;
}
.viewport > svg {
    width: 100%;
    height: 100%;
}
.perspective {
    background: linear-gradient(#1c1c1c, #333 40%, #4a4a4a);
    outline: 1px solid #7a6420;
}
.view-label {
    position: absolute;
    left: 3px;
    top: 4px;
    display: flex;
    align-items: center;
    gap: 6px;
    color: #ddd;
    font-size: 8px;
}
.view-label svg {
    width: 8px;
    height: 8px;
    fill: #707070;
}
.origin {
    stroke: #080808;
}
.wire-fill {
    fill: #2b5260;
    fill-opacity: .75;
}
.wire {
    stroke: #b9dbe6;
    stroke-width: 3;
}
.outline {
    stroke: #6ff0f4;
    stroke-width: 5;
}
.ln,
.red,
.grey {
    stroke-width: 3;
}
.red {
    stroke: #a82c2c;
}
.grey {
    stroke: #686868;
}
.axis {
    font: 20px "Noto Sans", sans-serif;
}
.r { fill: #b03030; }
.g { fill: #1c9a1c; }
.b { fill: #2525d0; }
.k { fill: #808080; }
.d { fill: #333; }
.ring {
    stroke: #85888c;
    stroke-width: 11;
}
.cube {
    fill: #9a9a9a;
    stroke: #aaa;
    stroke-width: 2;
}
.face,
.compass,
.cubelet {
    text-anchor: middle;
}
.face {
    font-size: 32px;
    fill: #60646c;
}
.compass {
    font-size: 18px;
    fill: #aaa;
}
.cubelet {
    font-size: 20px;
    fill: #5c5c5c;
}
.disc {
    fill: #8d9194;
}
.floor-line {
    stroke: #5a5a5a;
    stroke-width: 3;
}

/* timeline */
.time-slider {
    height: 15px;
    display: flex;
    align-items: center;
    gap: 2px;
    padding: 1px 2px;
}
.time-slider button {
    width: 9px;
    height: 10px;
    background: #5c5c5c;
}
.time-slider .frame {
    width: 78px;
}
.track {
    height: 26px;
    display: flex;
    padding-left: 6px;
    border-top: 1px solid #353535;
}
.curve {
    width: 32px;
    padding-bottom: 8px;
}
.curve svg {
    width: 12px;
    height: 10px;
}
.ruler {
    flex: 1;
    min-width: 0;
    background: #2c2c2c;
}
.tick {
    stroke: #6a6a6a;
}
.tick-label {
    font-size: 7px;
    fill: #ccc;
    text-anchor: middle;
}

.status {
    height: 34px;
    display: flex;
    align-items: center;
    padding-left: 3px;
}
.listener {
    flex: none;
    width: 63px;
    height: 29px;
    border: 1px solid #222;
    margin-right: 3px;
    display: flex;
    flex-direction: column;
    background: #fff;
}
.listener .macro {
    height: 14px;
    background: #dfc2c5;
    border-bottom: 1px solid #888;
}
.listener input {
    width: 100%;
    color: #777;
    padding-left: 2px;
}
.info {
    width: 401px;
    border-left: 1px solid #222;
    padding-left: 2px;
}
.row {
    display: flex;
    align-items: center;
    height: 15px;
}
.row button {
    position: relative;
    flex: none;
    width: 12px;
    height: 12px;
}
.row svg {
    width: 12px;
    height: 12px;
}
.info .row {
    gap: 5px;
}
.message {
    width: 112px;
}
.prompt {
    width: 229px;
}
.coordinate {
    width: 36px;
    height: 10px;
    background: #5a5a5a;
}
.row label {
    width: 7px;
    text-align: right;
}
.row label + input {
    margin-left: -3px;
}
.row .coordinate + label,
.row .coordinate + .grid-size {
    margin-left: 4px;
}
.info .row .sep {
    margin: 0 -1px;
}
.row .raised {
    background: #5c5c5c;
}
.dot {
    width: 6px;
    height: 6px;
    border-radius: 50%;
    background: #4ed84e;
}
.playback {
    width: 77px;
}
.playback .row {
    justify-content: space-between;
}
.spinner {
    display: flex;
    width: 44px;
    height: 11px;
    background: #5e5e5e;
    align-items: center;
}
.spinner input {
    flex: 1;
    width: 10px;
    padding-left: 3px;
}
.set-keys {
    flex: none;
    width: 26px;
    height: 26px;
    margin: 0 3px 0 7px;
    background: #626262;
}
.set-keys svg {
    width: 26px;
    height: 26px;
}
.keys {
    flex: none;
    width: 40px;
    display: grid;
    gap: 2px;
    margin-right: 3px;
}
.keys button {
    height: 12px;
    background: #626262;
}
.filters {
    width: 18px;
}
.keys .flat {
    background: none;
}
.flat svg {
    width: 14px;
    height: 12px;
}

/* command panel */
.command-panel {
    width: 138px;
    padding: 4px 2px 0 3px;
    display: flex;
    flex-direction: column;
}
.panel-tabs {
    display: flex;
    height: 20px;
    background: #3b3b3b;
    padding-right: 12px;
}
.panel-tabs button {
    flex: 1;
}
.panel-tabs .active {
    background: #484848;
}
.panel-tabs svg {
    width: 14px;
    height: 14px;
    stroke: #aaa;
}
.panel-tabs svg [fill]:not(.teal) {
    stroke: none;
}
.object-name {
    display: flex;
    gap: 4px;
    padding: 2px 1px;
}
.object-name input {
    flex: 1;
    height: 12px;
    padding-left: 3px;
    background: #5f5f5f;
}
.swatch {
    width: 12px;
    height: 12px;
    background: #98d95c;
    border: 1px solid #222;
}
.modifier {
    position: relative;
    padding-top: 2px;
}
.modifier select {
    display: block;
    width: 100%;
    height: 12px;
}
.modifier-menu {
    position: absolute;
    top: 14px;
    left: -1px;
    right: -1px;
    display: flex;
    background: #646464;
    border: 1px solid #2f78b0;
}
.modifier-menu ul {
    flex: 1;
    height: 377px;
    display: grid;
    grid-auto-rows: 1fr;
    list-style: none;
}
.modifier-menu li {
    padding-left: 12px;
}
.modifier-menu li[aria-selected] {
    background: #363636;
    color: #fff;
}
.scrollbar {
    width: 11px;
    background: #f0f0f0;
    display: flex;
    justify-content: center;
    align-items: flex-end;
}
.scrollbar i {
    width: 2px;
    height: 54px;
    background: #888;
}
```
FILE: script.js
```js
const svgNS = 'http://www.w3.org/2000/svg';

function add(parent, name, attrs, text) {
    const el = document.createElementNS(svgNS, name);
    for (const key in attrs) {
        el.setAttribute(key, attrs[key]);
    }
    if (text !== undefined) {
        el.textContent = text;
    }
    parent.appendChild(el);
}

// ground plane, u and v run from -1 to 1
function project(u, v) {
    const w = 1 - 0.17 * (u + v);
    return [425 + 242 * (u - v) / w, (250 + 74.5 * (u + v)) / w];
}

const floor = document.getElementById('floor');
for (let i = -7; i <= 7; i++) {
    const t = i / 7;
    [[project(t, -1), project(t, 1)], [project(-1, t), project(1, t)]].forEach(function([a, b]) {
        add(floor, 'line', { x1: a[0], y1: a[1], x2: b[0], y2: b[1], class: 'floor-line' });
    });
}

// track bar ruler, the frames that fit before the command panel
const ruler = document.getElementById('ruler');
const step = 7.04;
add(ruler, 'rect', { x: 0, y: 1, width: 5, height: 15, fill: '#9a9022' });
for (let frame = 0; frame <= 85; frame++) {
    const x = 3 + frame * step;
    add(ruler, 'line', { x1: x, x2: x, y1: 0, y2: frame % 5 ? 7 : 10, class: 'tick' });
    if (frame % 5 === 0) {
        add(ruler, 'text', { x: x, y: 15, class: 'tick-label' }, frame);
    }
}
```
